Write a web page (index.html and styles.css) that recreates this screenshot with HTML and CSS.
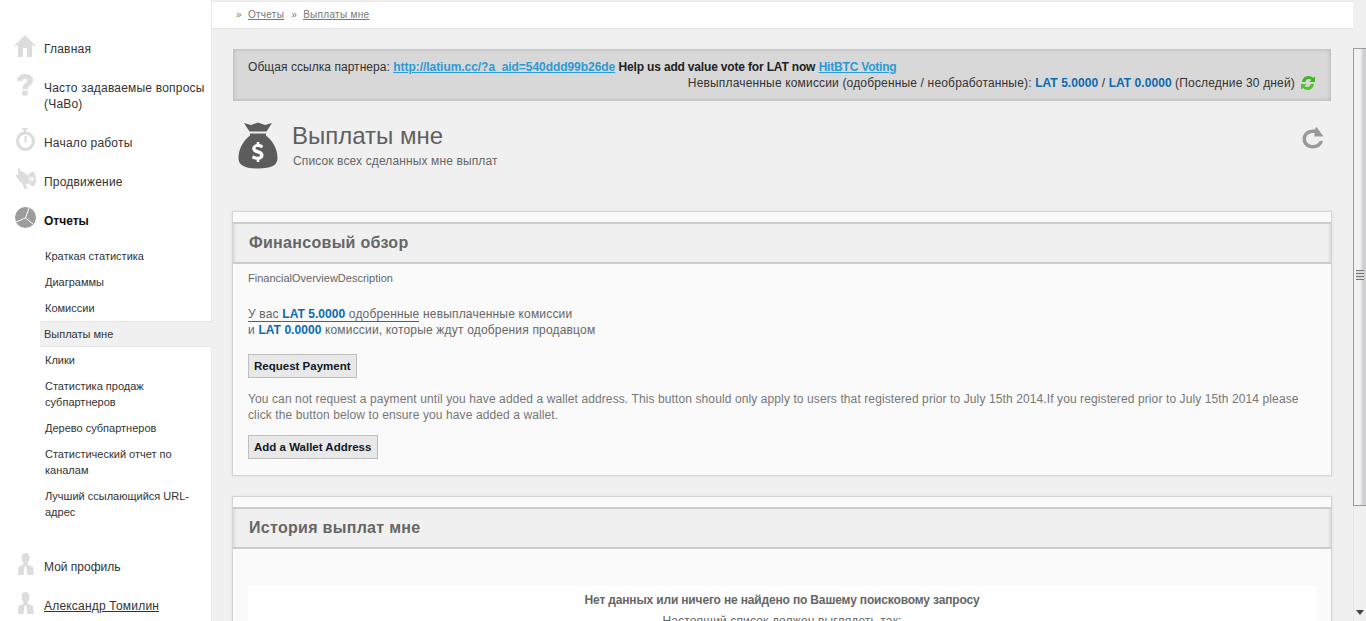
FILE: index.html
```html
<!DOCTYPE html>
<html lang="ru">
<head>
<meta charset="utf-8">
<title>Выплаты мне</title>
<link rel="stylesheet" href="styles.css">
</head>
<body>
<div class="page">
  <aside class="sidebar">
    <ul class="nav">
      <li class="nav-item"><svg class="nav-icon" viewBox="0 0 24 24"><path fill="#dcdcdc" d="M12 0 L23 11 L20.500 11 L19 9.500 L19 22 L14 22 L14 13 L10 13 L10 22 L5 22 L5 9.500 L3.500 11 L1 11 Z"/></svg><a class="nav-link">Главная</a></li>
      <li class="nav-item"><svg class="nav-icon" viewBox="0 0 24 24"><path fill="#dcdcdc" fill-rule="evenodd" d="M12 0 C17 0 20 2.500 20 6.500 C20 9.500 18 10.800 16.300 12 C15 13 14.700 13.500 14.700 15 L9.300 15 C9.300 12.500 10 11 12 9.600 C13.400 8.600 14.300 8 14.300 6.800 C14.300 5.500 13.400 4.700 12 4.700 C10.500 4.700 9.500 5.700 9.200 7.300 L4 6.500 C4.500 2.500 7.500 0 12 0 Z M9.300 16.500 L14.700 16.500 L14.700 21.500 L9.300 21.500 Z"/></svg><a class="nav-link">Часто задаваемые вопросы (ЧаВо)</a></li>
      <li class="nav-item"><svg class="nav-icon" viewBox="0 0 24 24"><path fill="#dcdcdc" fill-rule="evenodd" d="M9.500 -1 L14.500 -1 L14.500 1 L13 1 L13 2.600 C18 3.100 22 7.300 22 12 C22 17.500 17.500 22 12.500 22 C7 22 3 17.500 3 12 C3 7.300 6.500 3.100 11 2.600 L11 1 L9.500 1 Z M12.500 5.500 C9 5.500 6 8.500 6 12 C6 15.700 9 18.800 12.500 18.800 C16 18.800 19 15.700 19 12 C19 8.500 16 5.500 12.500 5.500 Z M11.500 7 L13.500 7 L13.500 13.500 L11.500 13.500 Z"/></svg><a class="nav-link">Начало работы</a></li>
      <li class="nav-item"><svg class="nav-icon" viewBox="0 0 24 24"><path fill="#dcdcdc" d="M5 0 L6.500 0 L7.500 3 L9 3 L10 4.500 L11.500 4.500 L13 7 L13 12 L11 16 L7 14 L5 11 L2.500 7.500 L3.500 6.500 L5.500 7.500 Z"/><path fill="#dcdcdc" d="M12 8 L19 4 L21 4 L23 9 L23 14 L21 18 L19 18 L15 15.500 L13 16 L14.500 20.500 L11.500 21 L9 15 Z"/><circle cx="19" cy="11" r="2.300" fill="#f4f4f4"/><path fill="none" stroke="#f4f4f4" stroke-width="0.800" d="M15.500 6 L16.500 15.500"/></svg><a class="nav-link">Продвижение</a></li>
      <li class="nav-item nav-item-current"><svg class="nav-icon" viewBox="0 0 24 24"><circle cx="12.500" cy="10.500" r="10.500" fill="#9c9c9c"/><path fill="none" stroke="#fff" stroke-width="1" d="M12.500 11 L16 1 M12.500 11 L3 15 M12.500 11 L20 17"/></svg><a class="nav-link">Отчеты</a></li>
    </ul>
    <ul class="subnav">
      <li class="sub-item">Краткая статистика</li>
      <li class="sub-item">Диаграммы</li>
      <li class="sub-item">Комиссии</li>
      <li class="sub-item sub-item-active">Выплаты мне</li>
      <li class="sub-item">Клики</li>
      <li class="sub-item">Статистика продаж субпартнеров</li>
      <li class="sub-item">Дерево субпартнеров</li>
      <li class="sub-item">Статистический отчет по каналам</li>
      <li class="sub-item">Лучший ссылающийся URL-адрес</li>
    </ul>
    <ul class="nav nav-bottom">
      <li class="nav-item"><svg class="nav-icon" viewBox="0 0 24 24"><path fill="#dcdcdc" d="M12.500 0 C15 0 16.500 2 16.500 4.500 C16.500 7 15.500 9 14.500 10 L14.500 11.500 L20 14 L21 22 L14.500 22 L13.500 14 L12.500 13 L11.500 14 L10.500 22 L5 22 L5.500 14 L10.500 11.500 L10.500 10 C9.500 9 8.500 7 8.500 4.500 C8.500 2 10 0 12.500 0 Z"/></svg><a class="nav-link nav-link-tight">Мой профиль</a></li>
      <li class="nav-item"><svg class="nav-icon" viewBox="0 0 24 24"><path fill="#dcdcdc" d="M12.500 0 C15 0 16.500 2 16.500 4.500 C16.500 7 15.500 9 14.500 10 L14.500 11.500 L20 14 L21 22 L14.500 22 L13.500 14 L12.500 13 L11.500 14 L10.500 22 L5 22 L5.500 14 L10.500 11.500 L10.500 10 C9.500 9 8.500 7 8.500 4.500 C8.500 2 10 0 12.500 0 Z"/></svg><a class="nav-link nav-link-user">Александр Томилин</a></li>
    </ul>
  </aside>

  <main class="main">
    <nav class="crumbs"><span class="crumb-sep">»</span><a class="crumb">Отчеты</a><span class="crumb-sep">»</span><a class="crumb">Выплаты мне</a></nav>

    <div class="content">
      <section class="notice">
        <div class="notice-line notice-line-left">Общая ссылка партнера: <a class="notice-link">http://latium.cc/?a_aid=540ddd99b26de</a> <b class="notice-strong">Help us add value vote for LAT now</b> <a class="notice-link notice-link-short">HitBTC Voting</a></div>
        <div class="notice-line notice-line-right">Невыплаченные комиссии (одобренные / необработанные): <b class="lat">LAT 5.0000</b> / <b class="lat">LAT 0.0000</b> (Последние 30 дней)<svg class="notice-icon" viewBox="0 0 16 16"><path fill="#3fb51f" d="M2 7 C2.500 3 5.500 1 8.500 1 C10.500 1 12 1.800 13 3 L15 1.500 L15 7 L9.500 7 L11.300 5 C10.500 4.300 9.700 4 8.500 4 C7 4 5.800 5 5.300 7 Z"/><path fill="#4fc52b" d="M14 9 C13.500 13 10.500 15 7.500 15 C5.500 15 4 14.200 3 13 L1 14.500 L1 9 L6.500 9 L4.700 11 C5.500 11.700 6.300 12 7.500 12 C9 12 10.200 11 10.700 9 Z"/></svg></div>
      </section>

      <header class="title-row">
        <svg class="title-icon" viewBox="0 0 40 48"><path fill="#5c5c5c" d="M6 1 L13 3 L20 0.500 L27 3 L34 1 L28.500 9.500 L11.500 9.500 Z M12 11.500 L28 11.500 L28 13.500 C35 19 39.500 27 39.500 36 C39.500 43 34 46.500 20 46.500 C6 46.500 0.500 43 0.500 36 C0.500 27 5 19 12 13.500 Z"/><path fill="#fff" d="M18.700 20 L21.300 20 L21.300 22 C23 22.300 24.500 23 25 23.500 L24 26.300 C22.500 25.500 21 25 19.500 25 C18 25 17.500 25.500 17.500 26.200 C17.500 27 18.500 27.500 20.500 28.200 C23.500 29.200 25.500 30.500 25.500 33.200 C25.500 35.700 23.700 37.300 21.300 37.700 L21.300 40 L18.700 40 L18.700 37.800 C16.800 37.700 15 37 14 36.300 L15 33.300 C16.500 34.300 18.300 34.800 19.800 34.800 C21.200 34.800 22 34.300 22 33.400 C22 32.500 21 32 19 31.300 C16.300 30.400 14.200 29.200 14.200 26.500 C14.200 24.200 16 22.500 18.700 22 Z"/></svg>
        <div class="title-text">
          <h1 class="page-title">Выплаты мне</h1>
          <p class="page-sub">Список всех сделанных мне выплат</p>
        </div>
        <svg class="reload" viewBox="0 0 22 22"><path fill="#999" d="M11 2.500 C5 2.500 0.500 6.500 0.500 12 C0.500 17.500 5 21.500 11 21.500 C16 21.500 20 18.500 21 14 L17.500 14 C16.500 16.500 14 18 11 18 C7 18 4 15.500 4 12 C4 8.500 7 6 11 6 L12.500 6 L12.500 9.500 L21.500 9.500 L14.500 0 L12.500 2.500 Z"/></svg>
      </header>

      <section class="card card-overview">
        <h2 class="card-head">Финансовый обзор</h2>
        <div class="card-body">
          <p class="desc">FinancialOverviewDescription</p>
          <p class="summary"><span class="red-line">У вас <b class="lat">LAT 5.0000</b> одобренные</span> невыплаченные комиссии<br>и <b class="lat">LAT 0.0000</b> комиссии, которые ждут одобрения продавцом</p>
          <button class="btn btn-request" type="button">Request Payment</button>
          <p class="warn">You can not request a payment until you have added a wallet address. This button should only apply to users that registered prior to July 15th 2014.If you registered prior to July 15th 2014 please click the button below to ensure you have added a wallet.</p>
          <button class="btn btn-wallet" type="button">Add a Wallet Address</button>
        </div>
      </section>

      <section class="card">
        <h2 class="card-head">История выплат мне</h2>
        <div class="card-body card-body-history">
          <div class="empty">
            <p class="empty-title">Нет данных или ничего не найдено по Вашему поисковому запросу</p>
            <p class="empty-sub">Настоящий список должен выглядеть так:</p>
          </div>
        </div>
      </section>
    </div>
  </main>

  <div class="scrollbar">
    <div class="scroll-gap"></div>
    <div class="scroll-thumb"><span class="scroll-grip"></span></div>
    <div class="scroll-track"><span class="scroll-arrow"></span></div>
  </div>
</div>
</body>
</html>
```

FILE: styles.css
```css
* { box-sizing: border-box; }
html, body { margin: 0; padding: 0; height: 100%; overflow: hidden; }
body { font-family: "Liberation Sans", Arial, sans-serif; font-size: 12px; line-height: 16px; color: #333; background: #fff; }
ul { list-style: none; margin: 0; padding: 0; }
p, h1, h2 { margin: 0; }

.page { display: flex; height: 621px; overflow: hidden; }

.sidebar { flex: 0 0 212px; background: #fff; padding-top: 30px; border-right: 1px solid #e8e8e8; }
.nav-item { display: flex; align-items: flex-start; padding: 11px 0 12px 13px; }
.nav-icon { flex: 0 0 24px; width: 24px; height: 24px; margin: -6px 7px -4px 0; overflow: visible; }
.nav-link { color: #333; letter-spacing: 0.2px; }
.nav-link-tight { letter-spacing: 0; }
.nav-item-current .nav-link { color: #111; font-weight: bold; letter-spacing: 0; }
.nav-link-user { text-decoration: underline; }
.subnav { margin-top: 2px; margin-left: 40px; }
.sub-item { padding: 5px 12px 5px 5px; font-size: 11px; color: #333; }
.sub-item-active { background: #f0f0f0; border-top: 1px solid #e4e4e4; border-bottom: 1px solid #e4e4e4; padding: 4px 12px 4px 4px; margin-right: -1px; }
.nav-bottom { margin-top: 23px; }

.main { flex: 1 1 auto; min-width: 0; background: #f0f0f0; }
.crumbs { height: 28px; margin-top: 1px; background: #fff; border-top: 1px solid #e6e6e6; border-bottom: 1px solid #e6e6e6; display: flex; align-items: center; padding-left: 24px; font-size: 10px; letter-spacing: 0.3px; color: #777; }
.crumb-sep { margin-right: 6px; }
.crumb { text-decoration: underline; margin-right: 7px; }

.content { padding: 20px 21px 0 20px; }
.notice { height: 52px; padding: 10px 15px 0 15px; background: #d8d8d8; box-shadow: inset 0 0 4px #aaa; margin: 0 1px; }
.notice-line { height: 16px; white-space: nowrap; }
.notice-line-left { letter-spacing: 0.05px; }
.notice-line-right { display: flex; justify-content: flex-end; align-items: center; white-space: pre; letter-spacing: 0.165px; }
.notice-link { color: #2a9bd6; font-weight: bold; text-decoration: underline; letter-spacing: -0.05px; }
.notice-link-short { letter-spacing: -0.2px; }
.notice-strong { color: #222; letter-spacing: -0.17px; }
.lat { color: #0a6ab0; font-weight: bold; letter-spacing: 0.05px; }
.notice-icon { width: 16px; height: 16px; margin-left: 5px; }

.title-row { display: flex; align-items: flex-start; height: 110px; padding: 21px 8px 0 6px; }
.title-icon { flex: 0 0 40px; width: 40px; height: 48px; }
.title-text { flex: 1 1 auto; padding-left: 14px; }
.page-title { font-size: 24px; line-height: 28px; font-weight: normal; color: #5f5f5f; }
.page-sub { margin-top: 3px; padding-left: 1px; color: #666; letter-spacing: 0.12px; }
.reload { flex: 0 0 22px; width: 22px; height: 22px; margin-top: 5px; }

.card { background: #fafafa; border: 1px solid #d4d4d4; box-shadow: 0 0 3px #ddd; padding-top: 10px; margin-bottom: 20px; }
.card-head { height: 42px; padding-left: 16px; font-size: 16px; line-height: 37px; font-weight: bold; color: #666; letter-spacing: 0.3px; background: #f0f0f0; border-top: 2px solid #ccc; border-bottom: 2px solid #ccc; box-shadow: inset 3px 0 2px -1px #ddd, inset -3px 0 2px -1px #ddd; }
.card-body { padding: 6px 15px 16px 15px; color: #666; }
.desc { font-size: 11px; }
.summary { margin-top: 20px; letter-spacing: 0.18px; }
.red-line { border-bottom: 1px solid #e0203a; }
.btn { display: block; height: 24px; padding: 0 5px; margin-top: 16px; font: bold 11.5px/20px "Liberation Sans", Arial, sans-serif; color: #111827; background: #e8e8e8; border: 1px solid #bfbfbf; }
.btn-wallet { padding-right: 6px; }
.warn { margin-top: 13px; color: #777; letter-spacing: 0.105px; }
.warn + .btn { margin-top: 12px; }
.card-body-history { padding-top: 37px; padding-bottom: 0; }
.empty { background: #fff; text-align: center; height: 60px; padding-top: 6px; }
.empty-title { font-weight: bold; color: #666; letter-spacing: -0.16px; }
.empty-sub { margin-top: 5px; color: #666; letter-spacing: 0.14px; }

.scrollbar { flex: 0 0 13px; display: flex; flex-direction: column; background: #f0f0f0; }
.scroll-gap { height: 48px; }
.scroll-thumb { height: 458px; display: flex; align-items: center; justify-content: center; border: 1px solid #999; border-right: 0; background: linear-gradient(to right, #f2f2f2 0, #f2f2f2 50%, #c8c8cc 85%, #d8d8dc 100%); }
.scroll-grip { display: block; width: 8px; height: 10px; margin-top: -4px; background: repeating-linear-gradient(to bottom, #777 0, #777 1px, #ddd 1px, #ddd 3px); }
.scroll-track { flex: 1 1 auto; display: flex; align-items: flex-end; justify-content: center; padding-bottom: 6px; border-left: 1px solid #e6e6e6; }
.scroll-arrow { display: block; width: 0; height: 0; border-left: 4px solid transparent; border-right: 4px solid transparent; border-top: 5px solid #444; }
```
